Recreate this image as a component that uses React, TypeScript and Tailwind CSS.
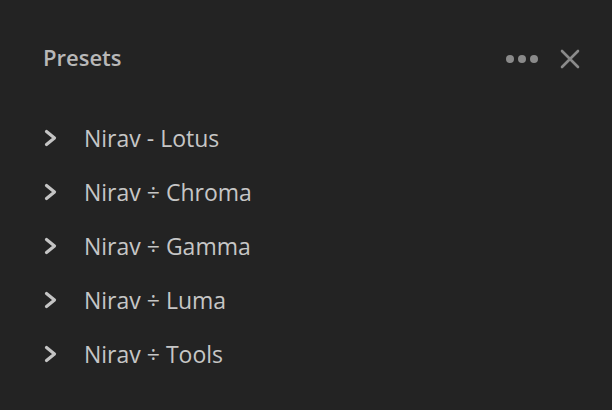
import React from 'react'

const presets = ['Nirav - Lotus', 'Nirav ÷ Chroma', 'Nirav ÷ Gamma', 'Nirav ÷ Luma', 'Nirav ÷ Tools']

function Chevron() {
    return (
        <svg width="16" height="22" viewBox="0 0 16 22" fill="none">
            <path d="M3.5 4.5 L11.5 11 L3.5 17.5" stroke="#c4c4c4" strokeWidth="3.2" strokeLinecap="round" strokeLinejoin="round" />
        </svg>
    )
}

export default function App() {
    return (
        <div className="w-[612px] h-[410px] bg-[#232323] text-[#c6c6c6] overflow-hidden" style={{ fontFamily: '"Open Sans", "Noto Sans", sans-serif' }}>
            {/* Header */}
            <div className="flex items-center justify-between pl-[43px] pr-[32px] pt-[38px] h-[76px]">
                <h2 className="text-[22px] font-semibold text-[#b8b8b8] leading-none">Presets</h2>
                <div className="flex items-center gap-[22px] mt-[4px]">
                    <div className="flex items-center gap-[4px]">
                        <span className="w-[8px] h-[8px] rounded-full bg-[#8a8a8a]" />
                        <span className="w-[8px] h-[8px] rounded-full bg-[#8a8a8a]" />
                        <span className="w-[8px] h-[8px] rounded-full bg-[#8a8a8a]" />
                    </div>
                    <svg width="20" height="20" viewBox="0 0 20 20">
                        <path d="M2 2 L18 18 M18 2 L2 18" stroke="#8a8a8a" strokeWidth="2.6" strokeLinecap="round" />
                    </svg>
                </div>
            </div>

            {/* Preset list */}
            <ul className="mt-[35px] flex flex-col">
                {presets.map((name) => (
                    <li key={name} className="flex items-center h-[54px] pl-[43px] gap-[25px]">
                        <Chevron />
                        <span className="text-[23px] leading-none">{name}</span>
                    </li>
                ))}
            </ul>
        </div>
    )
}
